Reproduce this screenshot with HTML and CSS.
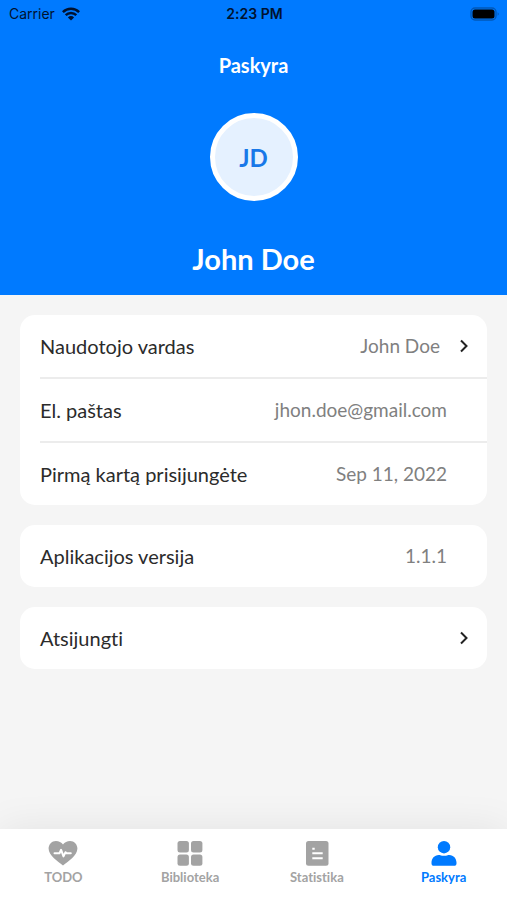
FILE: index.html
```html
<!DOCTYPE html>
<html lang="lt">
<head>
    <meta charset="UTF-8">
    <meta name="viewport" content="width=device-width, initial-scale=1.0">
    <title>Paskyra</title>
    <link rel="stylesheet" href="styles.css">
</head>
<body>
    <header class="profile-header">
        <div class="status-bar">
            <div class="carrier">
                <span>Carrier</span>
                <svg class="wifi" viewBox="0 0 18 14" aria-hidden="true">
                    <path d="M.9 5.1a11.6 11.6 0 0 1 16.2 0M3.7 8.1a7.6 7.6 0 0 1 10.6 0" fill="none" stroke="#001230" stroke-width="2.5"/>
                    <path d="M9 13.6 5.9 10.4a4.4 4.4 0 0 1 6.2 0z" fill="#001230"/>
                </svg>
            </div>
            <span class="time">2:23 PM</span>
            <svg class="battery" viewBox="0 0 30 14" aria-hidden="true">
                <rect x="1" y="1" width="25" height="12" rx="4" fill="none" stroke="#0058b8" stroke-width="1.4"/>
                <rect x="2.5" y="2.5" width="22" height="9" rx="2.5" fill="#000"/>
                <path d="M27.6 5.2a2 2 0 0 1 0 3.6z" fill="#0058b8"/>
            </svg>
        </div>
        <h1 class="title">Paskyra</h1>
        <div class="avatar">JD</div>
        <h2 class="name">John Doe</h2>
    </header>

    <main class="content">
        <section class="card">
            <button class="row" type="button">
                <span class="label">Naudotojo vardas</span>
                <span class="value">John Doe</span>
                <svg class="chevron" viewBox="0 0 8 14" aria-hidden="true">
                    <path d="M1 1.5 6.5 7 1 12.5"/>
                </svg>
            </button>
            <div class="row">
                <span class="label">El. paštas</span>
                <span class="value">jhon.doe@gmail.com</span>
            </div>
            <div class="row">
                <span class="label">Pirmą kartą prisijungėte</span>
                <span class="value">Sep 11, 2022</span>
            </div>
        </section>

        <section class="card">
            <div class="row">
                <span class="label">Aplikacijos versija</span>
                <span class="value">1.1.1</span>
            </div>
        </section>

        <section class="card">
            <button class="row" type="button">
                <span class="label">Atsijungti</span>
                <svg class="chevron" viewBox="0 0 8 14" aria-hidden="true">
                    <path d="M1 1.5 6.5 7 1 12.5"/>
                </svg>
            </button>
        </section>
    </main>

    <nav class="tab-bar">
        <a class="tab" href="#todo">
            <svg class="tab-icon" viewBox="0 0 30 26" aria-hidden="true">
                <path d="M15 25.6C9.5 21 .6 15.6.6 8.6.6 4.4 3.8 1 7.9 1 10.8 1 13.5 2.3 15 4.6 16.5 2.3 19.2 1 22.1 1c4.1 0 7.3 3.4 7.3 7.6 0 7-8.9 12.4-14.4 17z"/>
                <path class="cutout pulse" d="M6.5 13.2h5l1.6-3.4 2.4 6.6 2-4.2 1 1h4.3"/>
            </svg>
            <span>TODO</span>
        </a>
        <a class="tab" href="#biblioteka">
            <svg class="tab-icon" viewBox="0 0 30 26" aria-hidden="true">
                <rect x="2.5" y="1" width="11.4" height="11.4" rx="2.5"/>
                <rect x="16" y="1" width="11.4" height="11.4" rx="2.5"/>
                <rect x="2.5" y="14.4" width="11.4" height="11.4" rx="2.5"/>
                <rect x="16" y="14.4" width="11.4" height="11.4" rx="2.5"/>
            </svg>
            <span>Biblioteka</span>
        </a>
        <a class="tab" href="#statistika">
            <svg class="tab-icon" viewBox="0 0 30 26" aria-hidden="true">
                <rect x="4" y="1" width="22.5" height="24.8" rx="2.5"/>
                <path class="cutout" d="M10.3 8.8h2.4M10.3 13.3h10.4M10.3 18.3h10.4"/>
            </svg>
            <span>Statistika</span>
        </a>
        <a class="tab active" href="#paskyra" aria-current="page">
            <svg class="tab-icon" viewBox="0 0 30 26" aria-hidden="true">
                <circle cx="15" cy="7.2" r="6.2"/>
                <path d="M9.8 15c1.5 0 2.5.8 5.2.8s3.7-.8 5.2-.8c4.5 0 7.3 3.7 7.3 7.6v.9c0 1.4-1 2.3-2.3 2.3H4.8c-1.3 0-2.3-.9-2.3-2.3v-.9c0-3.9 2.8-7.6 7.3-7.6z"/>
            </svg>
            <span>Paskyra</span>
        </a>
    </nav>
</body>
</html>
```
FILE: styles.css
```css
* {
    box-sizing: border-box;
    margin: 0;
    padding: 0;
}

body {
    font-family: Lato, sans-serif;
    font-variant-ligatures: none;
    background-color: #f5f5f5;
    color: #2b2b2b;
    min-height: 100vh;
    display: flex;
    flex-direction: column;
}

.profile-header {
    background: #007aff;
    color: white;
    display: flex;
    flex-direction: column;
    align-items: center;
    padding-bottom: 18px;
}

.status-bar {
    width: 100%;
    height: 27px;
    padding: 0 7px 0 9px;
    display: grid;
    grid-template-columns: 1fr auto 1fr;
    align-items: center;
    font-family: Inter, sans-serif;
    font-size: 14px;
    color: #001230;
}

.carrier {
    display: flex;
    align-items: center;
    gap: 7px;
}

.wifi {
    width: 18px;
    height: 14px;
}

.time {
    font-weight: 600;
}

.battery {
    width: 30px;
    height: 14px;
    justify-self: end;
}

.title {
    margin-top: 26px;
    font-size: 20px;
    line-height: 24px;
    font-weight: 700;
}

.avatar {
    width: 88px;
    height: 88px;
    margin-top: 36px;
    border: 5px solid white;
    border-radius: 50%;
    background: #e5f1ff;
    color: #1878e8;
    display: flex;
    justify-content: center;
    align-items: center;
    font-size: 24px;
    font-weight: 700;
}

.name {
    margin-top: 40px;
    font-size: 29px;
    line-height: 36px;
    font-weight: 700;
}

.content {
    flex: 1;
    padding: 20px;
    display: flex;
    flex-direction: column;
    gap: 20px;
}

.card {
    background: white;
    border-radius: 15px;
    padding-left: 20px;
}

.row {
    width: 100%;
    min-height: 62px;
    padding-right: 40px;
    display: flex;
    align-items: center;
    border: none;
    background: none;
    font: inherit;
    font-size: 20px;
    font-variant-ligatures: none;
    line-height: 24px;
    color: inherit;
    text-align: left;
}

.row + .row {
    min-height: 64px;
    border-top: 2px solid #ececec;
}

button.row {
    padding-right: 19px;
    cursor: pointer;
}

.label {
    flex: 1;
}

.value {
    font-size: 19px;
    color: #808080;
}

.chevron {
    width: 8px;
    height: 14px;
    margin-left: 20px;
    fill: none;
    stroke: #222;
    stroke-width: 2;
}

.tab-bar {
    display: grid;
    grid-template-columns: repeat(4, 1fr);
    height: 71px;
    padding-top: 11px;
    background: white;
    box-shadow: 0 0 40px rgba(0, 0, 0, 0.08);
}

.tab {
    display: flex;
    flex-direction: column;
    align-items: center;
    gap: 3px;
    color: #a3a3a3;
    font-size: 13px;
    line-height: 16px;
    font-weight: 700;
    text-decoration: none;
}

.tab.active {
    color: #007aff;
}

.tab-icon {
    width: 30px;
    height: 26px;
    fill: currentColor;
}

.cutout {
    fill: none;
    stroke: white;
    stroke-width: 2;
}

.pulse {
    stroke-linecap: round;
    stroke-linejoin: round;
}
```
